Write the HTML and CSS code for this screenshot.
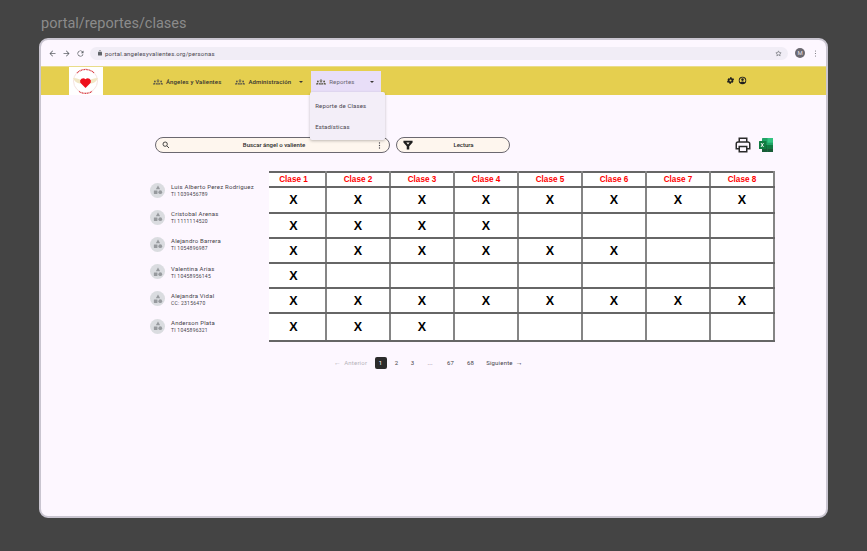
FILE: index.html
```html
<!DOCTYPE html>
<html lang="en">
<head>
    <meta charset="UTF-8">
    <meta name="viewport" content="width=device-width, initial-scale=1.0">
    <title>portal/reportes/clases</title>
    <link rel="stylesheet" href="styles.css">
</head>
<body>
    <h1 class="frame-title">portal/reportes/clases</h1>

    <div class="browser">
        <!-- browser toolbar -->
        <div class="toolbar">
            <svg class="tool-icon" viewBox="0 0 24 24"><path d="M20 11H7.800l5.600-5.600L12 4l-8 8 8 8 1.400-1.400L7.800 13H20z"/></svg>
            <svg class="tool-icon" viewBox="0 0 24 24"><path d="M4 11h12.200l-5.600-5.600L12 4l8 8-8 8-1.400-1.400 5.600-5.600H4z"/></svg>
            <svg class="tool-icon" viewBox="0 0 24 24"><path d="M17.600 6.400A8 8 0 1 0 19.700 14h-2.100a6 6 0 1 1-1.400-6.200L13 11h7V4z"/></svg>
            <div class="url-bar">
                <svg class="lock" viewBox="0 0 24 24"><path d="M18 8h-1V6a5 5 0 0 0-10 0v2H6a2 2 0 0 0-2 2v10a2 2 0 0 0 2 2h12a2 2 0 0 0 2-2V10a2 2 0 0 0-2-2zM9 6a3 3 0 0 1 6 0v2H9z"/></svg>
                <span class="url-text">portal.angelesyvalientes.org/personas</span>
                <svg class="star" viewBox="0 0 24 24"><path d="M12 3l2.700 6 6.300.6-4.800 4.200 1.500 6.200L12 16.700l-5.700 3.300 1.500-6.200L3 9.600 9.300 9z"/></svg>
            </div>
            <div class="profile">M</div>
            <svg class="kebab" viewBox="0 0 4 14"><circle cx="2" cy="2" r="1.200"/><circle cx="2" cy="7" r="1.200"/><circle cx="2" cy="12" r="1.200"/></svg>
        </div>

        <!-- app nav -->
        <nav class="navbar">
            <div class="logo-box">
                <svg viewBox="0 0 34 28" class="logo">
                    <circle cx="16.500" cy="14" r="12" fill="#fff" stroke="#f3dcd8" stroke-width="0.800"/>
                    <path d="M4 11c4 0 8 1 10 4-3 3-8 1-10-4zM29 11c-4 0-8 1-10 4 3 3 8 1 10-4z" fill="#f1e6c4"/>
                    <path d="M16.500 21l-5.200-5.300a3.200 3.200 0 0 1 5.200-3.500 3.200 3.200 0 0 1 5.200 3.500z" fill="#ee0f1c"/>
                    <path d="M8 6a12 12 0 0 1 17 0M10 24.500a12 12 0 0 0 13 0" fill="none" stroke="#d8323c" stroke-width="1.200" stroke-dasharray="1 0.600"/>
                </svg>
            </div>
            <ul class="nav-items">
                <li class="nav-item angels">
                    <svg class="group-icon" viewBox="0 0 24 24"><use href="#groups"/></svg>
                    <span>Ángeles y Valientes</span>
                </li>
                <li class="nav-item admin">
                    <svg class="group-icon" viewBox="0 0 24 24"><use href="#groups"/></svg>
                    <span>Administración</span>
                    <i class="caret"></i>
                </li>
                <li class="nav-item active">
                    <svg class="group-icon" viewBox="0 0 24 24"><use href="#groups"/></svg>
                    <span>Reportes</span>
                    <i class="caret"></i>
                    <div class="dropdown">
                        <div class="dropdown-item">Reporte de Clases</div>
                        <div class="dropdown-item">Estadísticas</div>
                    </div>
                </li>
            </ul>
            <div class="nav-actions">
                <svg class="action-icon" viewBox="0 0 24 24"><path d="M19.400 13a7.500 7.500 0 0 0 0-2l2.100-1.600-2-3.500-2.500 1a7.500 7.500 0 0 0-1.700-1l-.4-2.700h-4l-.4 2.700a7.500 7.500 0 0 0-1.700 1l-2.500-1-2 3.500L4.600 11a7.500 7.500 0 0 0 0 2l-2.100 1.600 2 3.500 2.500-1a7.500 7.500 0 0 0 1.700 1l.4 2.700h4l.4-2.700a7.500 7.500 0 0 0 1.700-1l2.500 1 2-3.500zM12 14.800a2.800 2.800 0 1 1 0-5.600 2.800 2.800 0 0 1 0 5.600z"/></svg>
                <svg class="action-icon" viewBox="0 0 24 24"><path fill-rule="evenodd" d="M12 2a10 10 0 1 0 0 20 10 10 0 0 0 0-20zm0 2.200a7.800 7.800 0 0 1 6.200 12.500c-1.700-1.400-4-2.200-6.200-2.200s-4.500.8-6.200 2.200A7.800 7.800 0 0 1 12 4.200zM12 6a3.500 3.500 0 1 0 0 7 3.500 3.500 0 0 0 0-7z"/></svg>
            </div>
        </nav>

        <main class="content">
            <div class="filters">
                <div class="pill search-pill">
                    <svg class="search-icon" viewBox="0 0 24 24" fill="none" stroke="#2b2b2b" stroke-width="2.600"><circle cx="9.500" cy="9.500" r="6.500"/><path d="M14.500 14.500L21 21"/></svg>
                    <span class="pill-label">Buscar ángel o valiente</span>
                    <svg class="pill-kebab" viewBox="0 0 4 14"><circle cx="2" cy="2" r="1.300"/><circle cx="2" cy="7" r="1.300"/><circle cx="2" cy="12" r="1.300"/></svg>
                </div>
                <div class="pill filter-pill">
                    <svg class="funnel" viewBox="0 0 24 24"><path fill-rule="evenodd" d="M1 2h22v4l-8 9v8H9v-8L1 6zm7 4l4 4.500L16 6z"/></svg>
                    <span class="pill-label">Lectura</span>
                </div>
                <div class="exports">
                    <svg class="print-icon" viewBox="0 0 24 24" fill="none" stroke="#2b2b2b" stroke-width="2"><path d="M7 8V3h10v5M7 17H3v-6.500A2.500 2.500 0 0 1 5.500 8h13a2.500 2.500 0 0 1 2.500 2.500V17h-4"/><path d="M7 14h10v7H7z"/></svg>
                    <svg class="excel-icon" viewBox="0 0 16 16">
                        <rect x="4" y="1" width="11" height="14" rx="0.800" fill="#21a366"/>
                        <rect x="9.500" y="1" width="5.500" height="4.700" fill="#33c481"/>
                        <rect x="4" y="8" width="5.500" height="7" fill="#185c37"/>
                        <rect x="9.500" y="8" width="5.500" height="3.500" fill="#107c41"/>
                        <rect x="9.500" y="11.500" width="5.500" height="3.500" fill="#185c37"/>
                        <rect x="1" y="4" width="7.500" height="8" rx="0.600" fill="#107c41"/>
                        <path d="M3 6l2.500 4M5.500 6L3 10" stroke="#fff" stroke-width="0.900"/>
                    </svg>
                </div>
            </div>

            <div class="report">
                <div class="people">
                    <div class="person">
                        <div class="avatar"><svg viewBox="0 0 16 16"><use href="#shapes"/></svg></div>
                        <div><div class="person-name">Luis Alberto Perez Rodriguez</div><div class="person-doc">TI 1039456789</div></div>
                    </div>
                    <div class="person">
                        <div class="avatar"><svg viewBox="0 0 16 16"><use href="#shapes"/></svg></div>
                        <div><div class="person-name">Cristobal Arenas</div><div class="person-doc">TI 1111114520</div></div>
                    </div>
                    <div class="person">
                        <div class="avatar"><svg viewBox="0 0 16 16"><use href="#shapes"/></svg></div>
                        <div><div class="person-name">Alejandro Barrera</div><div class="person-doc">TI 1054896987</div></div>
                    </div>
                    <div class="person">
                        <div class="avatar"><svg viewBox="0 0 16 16"><use href="#shapes"/></svg></div>
                        <div><div class="person-name">Valentina Arias</div><div class="person-doc">TI 10458956145</div></div>
                    </div>
                    <div class="person">
                        <div class="avatar"><svg viewBox="0 0 16 16"><use href="#shapes"/></svg></div>
                        <div><div class="person-name">Alejandra Vidal</div><div class="person-doc">CC: 23156470</div></div>
                    </div>
                    <div class="person">
                        <div class="avatar"><svg viewBox="0 0 16 16"><use href="#shapes"/></svg></div>
                        <div><div class="person-name">Anderson Plata</div><div class="person-doc">TI 1045896321</div></div>
                    </div>
                </div>

                <table class="classes">
                    <thead>
                        <tr><th>Clase 1</th><th>Clase 2</th><th>Clase 3</th><th>Clase 4</th><th>Clase 5</th><th>Clase 6</th><th>Clase 7</th><th>Clase 8</th></tr>
                    </thead>
                    <tbody>
                        <tr class="r1"><td>X</td><td>X</td><td>X</td><td>X</td><td>X</td><td>X</td><td>X</td><td>X</td></tr>
                        <tr class="r2"><td>X</td><td>X</td><td>X</td><td>X</td><td></td><td></td><td></td><td></td></tr>
                        <tr class="r3"><td>X</td><td>X</td><td>X</td><td>X</td><td>X</td><td>X</td><td></td><td></td></tr>
                        <tr class="r4"><td>X</td><td></td><td></td><td></td><td></td><td></td><td></td><td></td></tr>
                        <tr class="r5"><td>X</td><td>X</td><td>X</td><td>X</td><td>X</td><td>X</td><td>X</td><td>X</td></tr>
                        <tr class="r6"><td>X</td><td>X</td><td>X</td><td></td><td></td><td></td><td></td><td></td></tr>
                    </tbody>
                </table>
            </div>

            <div class="pagination">
                <span class="page-link disabled"><span class="arrow">←</span>Anterior</span>
                <span class="page current">1</span>
                <span class="page">2</span>
                <span class="page">3</span>
                <span class="page dots">...</span>
                <span class="page wide">67</span>
                <span class="page wide">68</span>
                <span class="page-link next">Siguiente<span class="arrow after">→</span></span>
            </div>
        </main>
    </div>

    <!-- shared icons -->
    <svg class="icon-defs" aria-hidden="true">
        <symbol id="groups" viewBox="0 0 24 24">
            <path fill-rule="evenodd" d="M12 6a3.200 3.200 0 1 0 0 6.400A3.200 3.200 0 0 0 12 6zm0 1.600a1.600 1.600 0 1 1 0 3.200 1.600 1.600 0 0 1 0-3.200zM4.500 8.500a2.300 2.300 0 1 0 0 4.600 2.300 2.300 0 0 0 0-4.600zm15 0a2.300 2.300 0 1 0 0 4.600 2.300 2.300 0 0 0 0-4.600zM12 13.500c-2.800 0-5.500 1.200-5.500 3V18h11v-1.500c0-1.800-2.700-3-5.500-3zm0 1.600c1.800 0 3.200.6 3.700 1.300H8.300c.5-.7 1.900-1.300 3.700-1.300zM0 18h5v-1.500c0-.8.300-1.500.8-2.100-.4-.1-.8-.1-1.300-.1C2.300 14.300 0 15.300 0 16.800zm24 0h-5v-1.500c0-.8-.3-1.500-.8-2.100.4-.1.800-.1 1.300-.1 2.200 0 4.500 1 4.500 2.500z"/>
        </symbol>
        <symbol id="shapes" viewBox="0 0 16 16">
            <path d="M8 2l2.900 5H5.100z"/>
            <rect x="2.500" y="8.500" width="4.800" height="4.800" rx="0.500"/>
            <circle cx="11" cy="10.900" r="2.500"/>
        </symbol>
    </svg>
</body>
</html>
```

FILE: styles.css
```css
body {
    margin: 0;
    width: 867px;
    height: 551px;
    overflow: hidden;
    background-color: #444444;
    font-family: Roboto, 'Liberation Sans', sans-serif;
    color: #1d1b20;
    padding: 15px 39px 0;
    box-sizing: border-box;
}
.frame-title {
    margin: 0 0 6px 2px;
    font-size: 14.500px;
    line-height: 17px;
    font-weight: 400;
    color: #8b8b8b;
}
.browser {
    height: 480px;
    box-sizing: border-box;
    border: 2px solid #c9c5d0;
    border-radius: 9px;
    background-color: #fdf7ff;
    overflow: hidden;
    display: flex;
    flex-direction: column;
    width: 789px;
}
.toolbar {
    height: 26px;
    flex: none;
    display: flex;
    align-items: center;
    padding: 0 9px 0 7px;
    gap: 3px;
    box-sizing: border-box;
}
.tool-icon {
    width: 9px;
    height: 9px;
    fill: #5f6368;
    margin-right: 2px;
}
.url-bar {
    flex: 1;
    height: 13px;
    border-radius: 7px;
    background-color: #f1edf6;
    display: flex;
    align-items: center;
    padding: 0 6px 0 7px;
}
.lock {
    width: 6px;
    height: 6px;
    fill: #5f6368;
    margin-right: 2px;
}
.url-text {
    flex: 1;
    font-size: 6px;
    letter-spacing: 0.200px;
    color: #49454f;
}
.star {
    width: 7px;
    height: 7px;
    fill: none;
    stroke: #5f6368;
    stroke-width: 2;
}
.profile {
    width: 10px;
    height: 10px;
    margin-left: 4px;
    border-radius: 50%;
    background-color: #6b6870;
    color: #e6e0e9;
    font-size: 6px;
    line-height: 10px;
    text-align: center;
}
.kebab {
    width: 3px;
    height: 7px;
    margin-left: 6px;
    fill: #6f6f75;
}

/* app nav */
.navbar {
    height: 29px;
    flex: none;
    display: flex;
    background-color: #e5cf4f;
    border-top: 1px solid #e9dc8a;
    box-sizing: border-box;
    padding-left: 28px;
}
.logo-box {
    width: 34px;
    height: 28px;
    background-color: #ffffff;
}
.logo {
    width: 34px;
    height: 28px;
    display: block;
}
.nav-items {
    list-style: none;
    margin: 4px 0 0 50px;
    padding: 0;
    display: flex;
}
.nav-item {
    position: relative;
    display: flex;
    align-items: center;
    height: 24px;
    padding-bottom: 3px;
    box-sizing: border-box;
    font-size: 6px;
    letter-spacing: 0.150px;
    font-weight: 500;
    color: #34322f;
}
.nav-item.angels {
    margin-right: 14px;
}
.nav-item.admin {
    margin-right: 8px;
}
.group-icon {
    width: 10px;
    height: 10px;
    fill: #5d5a4a;
    margin-right: 3px;
}
.caret {
    width: 0;
    height: 0;
    margin-left: 8px;
    border-left: 2px solid transparent;
    border-right: 2px solid transparent;
    border-top: 2px solid #3a3835;
}
.nav-item.active {
    background-color: #e8def8;
    color: #6a6570;
    font-weight: 400;
    width: 70px;
    padding-left: 5px;
}
.nav-item.active .caret {
    margin-left: auto;
    margin-right: 7px;
}
.dropdown {
    position: absolute;
    top: 21px;
    left: -1px;
    width: 75px;
    height: 48px;
    background-color: #f3eef8;
    border-radius: 2px;
    box-shadow: 0 1px 3px rgba(0, 0, 0, 0.25);
    color: #49454f;
    font-size: 6px;
    z-index: 5;
    padding-top: 3px;
    box-sizing: border-box;
}
.dropdown-item {
    height: 21px;
    line-height: 21px;
    padding-left: 5px;
}
.nav-actions {
    margin-left: auto;
    margin-right: 79px;
    display: flex;
    align-items: center;
    gap: 3px;
    height: 26px;
}
.action-icon {
    width: 9px;
    height: 9px;
    fill: #1f1f1f;
}

/* content */
.content {
    flex: 1;
    padding: 42px 0 0 109px;
}
.filters {
    display: flex;
    align-items: center;
    height: 16px;
    margin-left: 5px;
}
.pill {
    height: 16px;
    box-sizing: border-box;
    display: flex;
    align-items: center;
    border: 1px solid #6b6870;
    border-radius: 8px;
    background-color: #fef6ee;
    font-size: 6px;
    font-weight: 500;
    color: #2b2b2b;
}
.pill-label {
    flex: 1;
    text-align: center;
    padding-bottom: 2px;
}
.search-pill {
    width: 235px;
    padding: 0 8px 0 6px;
}
.search-icon {
    width: 8px;
    height: 8px;
}
.pill-kebab {
    width: 3px;
    height: 7px;
    fill: #45434a;
}
.filter-pill {
    width: 114px;
    margin-left: 6px;
    padding: 0 14px 0 6px;
}
.funnel {
    width: 10px;
    height: 10px;
    fill: #1f1f1f;
    margin-right: 19px;
}
.exports {
    display: flex;
    align-items: center;
    margin-left: 224px;
}
.print-icon {
    width: 18px;
    height: 18px;
}
.excel-icon {
    width: 16px;
    height: 16px;
    margin-left: 6px;
}

/* report */
.report {
    display: flex;
    margin-top: 18px;
}
.people {
    width: 119px;
    padding-top: 5.500px;
    flex: none;
}
.person {
    display: flex;
    align-items: center;
    height: 27.200px;
}
.avatar {
    width: 15px;
    height: 15px;
    flex: none;
    border-radius: 50%;
    background-color: #dadce0;
    margin-right: 6px;
    display: flex;
    align-items: center;
    justify-content: center;
}
.avatar svg {
    width: 12px;
    height: 12px;
    fill: #979a9e;
}
.person-name {
    font-size: 6px;
    letter-spacing: 0.220px;
    line-height: 9px;
    color: #45434a;
}
.person-doc {
    font-size: 5px;
    line-height: 7px;
    letter-spacing: 0.250px;
    color: #45434a;
}
.classes {
    border-collapse: collapse;
    table-layout: fixed;
    width: 505px;
    background-color: #ffffff;
    font-family: 'Liberation Sans', Arial, sans-serif;
    align-self: flex-start;
}
.classes th, .classes td {
    box-sizing: border-box;
    width: 64px;
    border-style: solid;
    border-width: 2px;
    border-color: #666666 #858585;
    padding: 0;
    text-align: center;
}
.classes tr th:first-child, .classes tr td:first-child {
    width: 57px;
    border-left: none;
    padding-right: 7px;
}
.classes th {
    height: 15px;
    font-size: 8.200px;
    color: #ff0000;
}
.classes td {
    height: 25px;
    font-size: 12.500px;
    font-weight: 700;
    color: #000000;
}
.classes .r1 td { height: 26px; }
.classes .r6 td { height: 28px; }

/* pagination */
.pagination {
    display: flex;
    align-items: center;
    margin-top: 14px;
    margin-left: 184px;
    font-size: 6px;
    letter-spacing: 0.200px;
    color: #45434a;
    height: 13px;
}
.page-link.disabled {
    color: #b6b3ba;
    margin-right: 7.500px;
}
.arrow {
    margin-right: 3px;
    font-size: 7px;
}
.arrow.after {
    margin: 0 0 0 3px;
}
.page {
    width: 12px;
    height: 12px;
    margin-right: 4px;
    line-height: 12px;
    text-align: center;
    border-radius: 2px;
}
.page.wide {
    width: 16px;
}
.page.current {
    background-color: #2b2b2b;
    color: #ffffff;
}
.page.dots {
    margin: 0 6.500px 0 1.500px;
}
.page-link.next {
    margin-left: 3.500px;
}
.icon-defs {
    display: none;
}
```
